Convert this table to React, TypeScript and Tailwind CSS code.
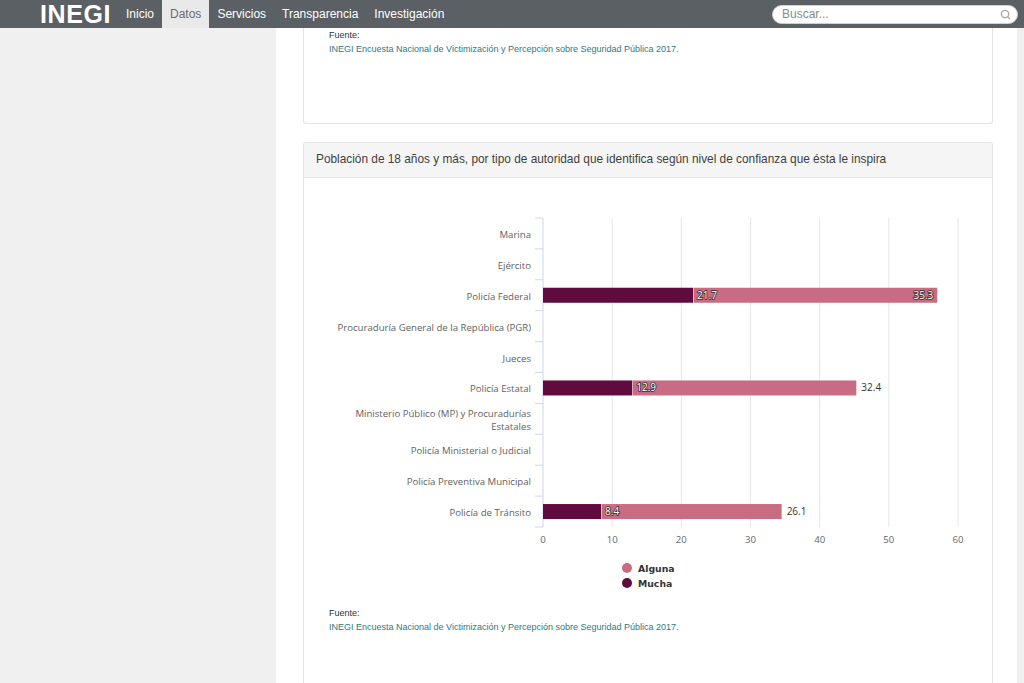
import { Search } from "lucide-react";

const categories = [
  ["Marina"],
  ["Ejército"],
  ["Policía Federal"],
  ["Procuraduría General de la República (PGR)"],
  ["Jueces"],
  ["Policía Estatal"],
  ["Ministerio Público (MP) y Procuradurías", "Estatales"],
  ["Policía Ministerial o Judicial"],
  ["Policía Preventiva Municipal"],
  ["Policía de Tránsito"],
];

// index of category, mucha, alguna, whether the total label sits outside
const bars = [
  { idx: 2, mucha: 21.7, alguna: 35.3, outside: false },
  { idx: 5, mucha: 12.9, alguna: 32.4, outside: true },
  { idx: 9, mucha: 8.4, alguna: 26.1, outside: true },
];

const MUCHA = "#600a3f";
const ALGUNA = "#c96b83";

const X0 = 239;
const UNIT = 415 / 60;
const TOP = 40;
const BOTTOM = 349;
const BAND = (BOTTOM - TOP) / categories.length;

function Chart() {
  const sx = (v: number) => X0 + v * UNIT;
  return (
    <svg width="688" height="425" className="block" style={{ fontFamily: '"Open Sans", sans-serif' }}>
      {/* grid */}
      {[10, 20, 30, 40, 50, 60].map((t) => (
        <line key={t} x1={sx(t)} x2={sx(t)} y1={TOP} y2={BOTTOM} stroke="#e6e6e6" strokeWidth="1" />
      ))}
      {/* category axis */}
      <line x1={X0} x2={X0} y1={TOP} y2={BOTTOM} stroke="#ccd6eb" strokeWidth="1" />
      {Array.from({ length: categories.length + 1 }).map((_, i) => (
        <line key={i} x1={X0 - 8} x2={X0} y1={TOP + i * BAND} y2={TOP + i * BAND} stroke="#ccd6eb" strokeWidth="1" />
      ))}
      {categories.map((lines, i) => {
        const cy = TOP + BAND * (i + 0.5);
        const start = cy - ((lines.length - 1) * 13) / 2 + 4.5;
        return (
          <text key={i} textAnchor="end" fontSize="9.6" fill="#5f5f5f">
            {lines.map((l, j) => (
              <tspan key={j} x={227} y={start + j * 13}>
                {l}
              </tspan>
            ))}
          </text>
        );
      })}
      {/* x labels */}
      {[0, 10, 20, 30, 40, 50, 60].map((t) => (
        <text key={t} x={sx(t)} y={365} textAnchor="middle" fontSize="9.6" fill="#666666">
          {t}
        </text>
      ))}
      {/* bars */}
      {bars.map((b) => {
        const cy = TOP + BAND * (b.idx + 0.5);
        const y = cy - 7.5;
        const xm = sx(b.mucha);
        const xe = sx(b.mucha + b.alguna);
        return (
          <g key={b.idx}>
            <rect x={X0} y={y} width={xm - X0} height={15} fill={MUCHA} />
            <rect x={xm + 0.5} y={y} width={xe - xm - 0.5} height={15} fill={ALGUNA} />
            <text
              x={xm + 4}
              y={cy + 3.5}
              fontSize="10"
              fill="#ffffff"
              stroke="#333333"
              strokeWidth="1.6"
              style={{ paintOrder: "stroke" }}
            >
              {b.mucha}
            </text>
            {b.outside ? (
              <text x={xe + 5} y={cy + 3.5} fontSize="10" fill="#333333">
                {b.alguna}
              </text>
            ) : (
              <text
                x={xe - 4}
                y={cy + 3.5}
                textAnchor="end"
                fontSize="10"
                fill="#ffffff"
                stroke="#333333"
                strokeWidth="1.6"
                style={{ paintOrder: "stroke" }}
              >
                {b.alguna}
              </text>
            )}
          </g>
        );
      })}
      {/* legend */}
      <g style={{ fontFamily: '"DejaVu Sans", sans-serif' }} fontSize="9.3" fontWeight="bold" fill="#333333">
        <circle cx={323} cy={390} r={5} fill={ALGUNA} />
        <text x={334} y={393.5}>Alguna</text>
        <circle cx={323} cy={405} r={5} fill={MUCHA} />
        <text x={334} y={408.5}>Mucha</text>
      </g>
    </svg>
  );
}

function Fuente() {
  return (
    <div className="text-[9px] leading-[14px]" style={{ fontFamily: '"Liberation Sans", Arial, sans-serif' }}>
      <p className="text-[#333]">Fuente:</p>
      <p className="text-[#2c7a85]">INEGI Encuesta Nacional de Victimización y Percepción sobre Seguridad Pública 2017.</p>
    </div>
  );
}

const nav = ["Inicio", "Datos", "Servicios", "Transparencia", "Investigación"];

export default function App() {
  return (
    <div className="h-[683px] overflow-hidden flex flex-col bg-white" style={{ fontFamily: '"Liberation Sans", Arial, sans-serif' }}>
      {/* Navbar */}
      <header className="h-[28px] shrink-0 bg-[#5b6064] flex items-stretch pl-[40px] pr-[6px]">
        <div className="flex items-center shrink-0 w-[78px] text-white font-bold text-[25px] leading-[26px] tracking-[0.6px]">INEGI</div>
        <nav className="flex items-stretch text-[12px]">
          {nav.map((n) => (
            <a
              key={n}
              className={
                n === "Datos"
                  ? "flex items-center px-2 bg-[#e9e9e9] text-[#6b6b6b]"
                  : "flex items-center px-2 text-white"
              }
            >
              {n}
            </a>
          ))}
        </nav>
        <div className="ml-auto flex items-center">
          <div className="w-[246px] h-[19px] rounded-full bg-white border border-[#d0d0d0] flex items-center pl-[9px] pr-[6px]">
            <span className="flex-1 text-[12px] text-[#8a8a8a]">Buscar...</span>
            <Search size={11} strokeWidth={3} className="text-[#a8a8a8]" />
          </div>
        </div>
      </header>

      <div className="flex-1 flex min-h-0">
        <aside className="w-[276px] shrink-0 bg-[#f0f0f0]" />
        <main className="flex-1 pl-[27px] pr-[24px] flex flex-col">
          {/* previous card (cut at top) */}
          <section className="h-[96px] border border-t-0 border-[#e3e3e3] rounded-b-[3px] pl-[25px]">
            <Fuente />
          </section>

          <section className="mt-[18px] flex-1 border border-b-0 border-[#e3e3e3] rounded-t-[3px] flex flex-col">
            <div className="h-[35px] shrink-0 bg-[#f5f5f5] border-b border-[#e3e3e3] flex items-center pl-[12px] text-[11.85px] text-[#3f3f3f]">
              Población de 18 años y más, por tipo de autoridad que identifica según nivel de confianza que ésta le inspira
            </div>
            <Chart />
            <div className="pl-[25px] mt-[3px]">
              <Fuente />
            </div>
          </section>
        </main>
        <div className="w-[7px] shrink-0 bg-[#f0f0f0]" />
      </div>
    </div>
  );
}
